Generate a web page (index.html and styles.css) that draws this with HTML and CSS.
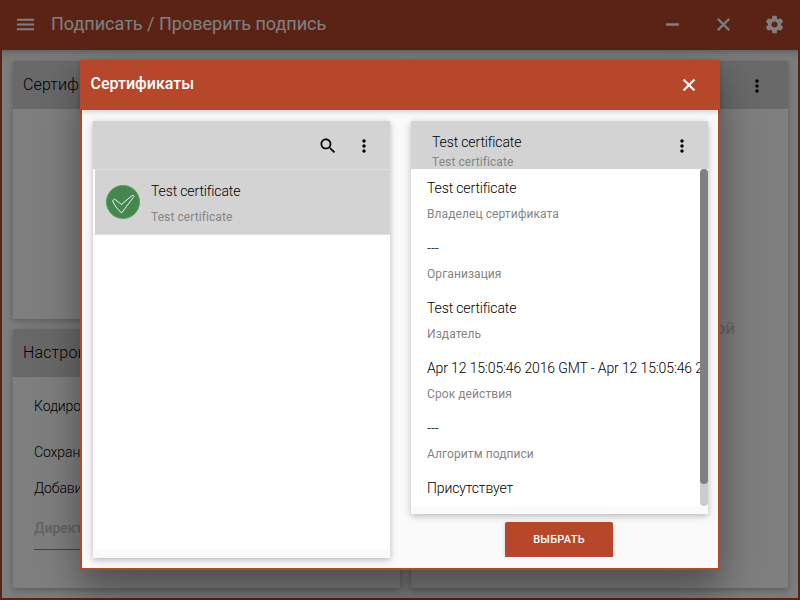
FILE: index.html
```html
<!DOCTYPE html>
<html lang="ru">
<head>
<meta charset="utf-8">
<title>Подписать / Проверить подпись</title>
<link rel="stylesheet" href="styles.css">
</head>
<body>
<div class="app">
  <header class="navbar">
    <svg class="icon menu" viewBox="0 0 24 24"><path d="M3 18h18v-2H3v2zm0-5h18v-2H3v2zm0-7v2h18V6H3z"/></svg>
    <h1 class="title">Подписать / Проверить подпись</h1>
    <div class="window-buttons">
      <svg class="icon bold" viewBox="0 0 24 24"><path d="M19 13H5v-2h14v2z"/></svg>
      <svg class="icon bold" viewBox="0 0 24 24"><path d="M19 6.41L17.59 5 12 10.59 6.41 5 5 6.41 10.59 12 5 17.59 6.41 19 12 13.41 17.59 19 19 17.59 13.41 12z"/></svg>
      <svg class="icon" viewBox="0 0 24 24"><path d="M19.43 12.98c.04-.32.07-.64.07-.98s-.03-.66-.07-.98l2.11-1.65c.19-.15.24-.42.12-.64l-2-3.46c-.12-.22-.39-.3-.61-.22l-2.49 1c-.52-.4-1.08-.73-1.69-.98l-.38-2.65C14.46 2.18 14.25 2 14 2h-4c-.25 0-.46.18-.49.42l-.38 2.65c-.61.25-1.17.59-1.69.98l-2.49-1c-.23-.09-.49 0-.61.22l-2 3.46c-.13.22-.07.49.12.64l2.11 1.65c-.04.32-.07.65-.07.98s.03.66.07.98l-2.11 1.65c-.19.15-.24.42-.12.64l2 3.46c.12.22.39.3.61.22l2.49-1c.52.4 1.08.73 1.69.98l.38 2.65c.03.24.24.42.49.42h4c.25 0 .46-.18.49-.42l.38-2.65c.61-.25 1.17-.59 1.69-.98l2.49 1c.23.09.49 0 .61-.22l2-3.46c.12-.22.07-.49-.12-.64l-2.11-1.65zM12 15.5c-1.93 0-3.5-1.57-3.5-3.5s1.57-3.5 3.5-3.5 3.5 1.57 3.5 3.5-1.57 3.5-3.5 3.5z"/></svg>
    </div>
  </header>
  <main class="workspace">
    <div class="column">
      <section class="card signer">
        <div class="card-head">Сертификаты</div>
      </section>
      <section class="card settings">
        <div class="card-head">Настройки</div>
        <div class="form">
          <div class="option encoding">Кодировка</div>
          <div class="option save">Сохранить</div>
          <div class="option add">Добавить</div>
          <div class="directory">Директория</div>
        </div>
      </section>
    </div>
    <section class="card files">
      <div class="card-head files-head">
        <svg class="icon small" viewBox="0 0 24 24"><path d="M12 8c1.100 0 2-.9 2-2s-.9-2-2-2-2 .9-2 2 .9 2 2 2zm0 2c-1.100 0-2 .9-2 2s.9 2 2 2 2-.9 2-2-.9-2-2-2zm0 6c-1.100 0-2 .9-2 2s.9 2 2 2 2-.9 2-2-.9-2-2-2z"/></svg>
      </div>
      <div class="drop-hint">мышкой</div>
    </section>
  </main>
</div>
<div class="overlay"></div>
<div class="modal">
  <header class="modal-head">
    <h2 class="modal-title">Сертификаты</h2>
    <svg class="icon bold" viewBox="0 0 24 24"><path d="M19 6.41L17.59 5 12 10.59 6.41 5 5 6.41 10.59 12 5 17.59 6.41 19 12 13.41 17.59 19 19 17.59 13.41 12z"/></svg>
  </header>
  <div class="modal-body">
    <section class="card list-card">
      <div class="card-head tools">
        <svg class="icon small" viewBox="0 0 24 24"><path d="M15.5 14h-.79l-.28-.27C15.410 12.590 16 11.110 16 9.500 16 5.910 13.090 3 9.500 3S3 5.910 3 9.500 5.910 16 9.500 16c1.610 0 3.090-.59 4.230-1.570l.27.28v.79l5 4.990L20.490 19l-4.990-5zm-6 0C7.010 14 5 11.990 5 9.500S7.010 5 9.500 5 14 7.010 14 9.500 11.990 14 9.500 14z"/></svg>
        <svg class="icon small" viewBox="0 0 24 24"><path d="M12 8c1.100 0 2-.9 2-2s-.9-2-2-2-2 .9-2 2 .9 2 2 2zm0 2c-1.100 0-2 .9-2 2s.9 2 2 2 2-.9 2-2-.9-2-2-2zm0 6c-1.100 0-2 .9-2 2s.9 2 2 2 2-.9 2-2-.9-2-2-2z"/></svg>
      </div>
      <div class="card-content">
        <div class="cert">
          <svg class="badge" viewBox="0 0 34 34"><circle cx="17" cy="17" r="16.600" fill="#47874f" stroke="#4fa35c" stroke-width=".8"/><path d="M6.500 16L8.500 14L15.500 19.500L26 10.500Q27.500 10 28 11.500L15.500 28Q9 22 6.500 16Z" fill="none" stroke="#fff" stroke-width=".9" stroke-linejoin="round"/></svg>
          <div>
            <div class="name">Test certificate</div>
            <div class="sub">Test certificate</div>
          </div>
        </div>
      </div>
    </section>
    <div class="details">
      <section class="card info-card">
        <div class="card-head info-head">
          <div>
            <div class="name">Test certificate</div>
            <div class="sub">Test certificate</div>
          </div>
          <svg class="icon small" viewBox="0 0 24 24"><path d="M12 8c1.100 0 2-.9 2-2s-.9-2-2-2-2 .9-2 2 .9 2 2 2zm0 2c-1.100 0-2 .9-2 2s.9 2 2 2 2-.9 2-2-.9-2-2-2zm0 6c-1.100 0-2 .9-2 2s.9 2 2 2 2-.9 2-2-.9-2-2-2z"/></svg>
        </div>
        <div class="card-content info">
          <div class="fields">
            <div class="field"><div class="name">Test certificate</div><div class="sub">Владелец сертификата</div></div>
            <div class="field"><div class="name">---</div><div class="sub">Организация</div></div>
            <div class="field"><div class="name">Test certificate</div><div class="sub">Издатель</div></div>
            <div class="field"><div class="name">Apr 12 15:05:46 2016 GMT - Apr 12 15:05:46 2026 GMT</div><div class="sub">Срок действия</div></div>
            <div class="field"><div class="name">---</div><div class="sub">Алгоритм подписи</div></div>
            <div class="field"><div class="name">Присутствует</div></div>
          </div>
          <div class="track"><div class="thumb"></div></div>
        </div>
      </section>
      <button class="select">Выбрать</button>
    </div>
  </div>
</div>
</body>
</html>
```

FILE: styles.css
```css
* { box-sizing: border-box; }
body { margin: 0; width: 800px; height: 600px; overflow: hidden; font-family: Roboto, "Noto Sans", sans-serif; font-size: 14px; color: rgba(0,0,0,.87); }
h1, h2 { margin: 0; }
.icon { display: block; width: 24px; height: 24px; flex: none; fill: #fff; }
.bold { stroke: #fff; stroke-width: .8; }
.small { width: 20px; height: 20px; fill: #000; }
.app { height: 600px; display: flex; flex-direction: column; border: 2px solid #b7472a; border-top: 0; background: #fafafa; }
.navbar { height: 50px; flex: none; margin: 0 -2px; padding: 0 15px 0 14px; display: flex; align-items: center; background: #b7472a; color: #fff; box-shadow: 0 2px 5px rgba(0,0,0,.16), 0 2px 10px rgba(0,0,0,.12); }
.menu { width: 23px; height: 23px; margin-top: -1px; }
.title { margin-left: 14px; font-size: 18px; font-weight: 400; line-height: 48px; padding-bottom: 2px; }
.window-buttons { margin-left: auto; display: flex; gap: 30px; padding-bottom: 1px; }
.window-buttons .icon { width: 21px; height: 21px; }
.workspace { flex: 1; display: flex; gap: 11px; padding: 11px 10px 10px 11px; min-height: 0; }
.column { width: 387px; display: flex; flex-direction: column; gap: 10px; }
.card { background: #fff; box-shadow: 0 2px 5px rgba(0,0,0,.16), 0 2px 10px rgba(0,0,0,.12); }
.card-head { height: 48px; background: #d3d3d3; }
.column .card-head { padding-left: 10px; font-size: 16px; font-weight: 300; letter-spacing: .15px; line-height: 48px; color: #000; }
.signer { height: 258px; }
.settings { flex: 1; }
.form { padding: 18px 20px 0 21px; }
.option { line-height: 22px; font-weight: 300; letter-spacing: -.1px; color: #000; }
.save { margin-top: 24px; }
.add { margin-top: 14px; }
.directory { margin-top: 14px; height: 37px; line-height: 31px; font-weight: 500; color: #c8c8c8; border-bottom: 1px solid #8080a0; }
.files { flex: 1; }
.files-head { display: flex; align-items: center; justify-content: flex-end; padding: 1px 21px 0 0; }
.drop-hint { margin-top: 208px; padding-right: 53px; text-align: right; font-size: 17px; font-weight: 500; line-height: 22px; color: #d0d0d0; }
.overlay { position: absolute; inset: 0; background: rgba(0,0,0,.5); }
.modal { position: absolute; left: 80px; top: 60px; width: 640px; height: 510px; border: 2px solid #b7472a; border-top: 0; border-radius: 2px; background: #fafafa; box-shadow: 0 16px 28px rgba(0,0,0,.22), 0 25px 55px rgba(0,0,0,.21); }
.modal-head { height: 50px; margin: 0 -2px; padding: 0 20.6px 0 10.500px; display: flex; align-items: center; justify-content: space-between; background: #b7472a; color: #fff; border-radius: 2px 2px 0 0; box-shadow: 0 2px 5px rgba(0,0,0,.16); }
.modal-head .icon { width: 20px; height: 20px; }
.modal-title { font-size: 16px; font-weight: 500; line-height: 48px; padding-bottom: 2px; }
.modal-body { display: flex; gap: 21px; padding: 11px 10px 0 11px; }
.list-card { width: 297px; height: 437px; background: #fafafa; }
.tools { display: flex; align-items: center; justify-content: flex-end; gap: 16px; padding: 2px 16px 0 0; }
.list-card .card-content { height: 381px; background: #fff; }
.cert { display: flex; height: 66px; border: 1px solid #e0e0e0; border-left: 2px solid #fff; border-right: 0; background: #d3d3d3; padding: 15px 0 0 11px; }
.badge { width: 34px; height: 34px; margin-right: 11px; }
.name { line-height: 22px; font-weight: 300; letter-spacing: -.13px; color: #000; white-space: nowrap; }
.sub { font-size: 12px; line-height: 16px; letter-spacing: .08px; color: #858585; }
.cert .name { margin-top: -5px; }
.cert .sub { margin-top: 7px; }
.details { width: 297px; display: flex; flex-direction: column; align-items: center; gap: 8px; }
.info-card { width: 297px; height: 393px; background: #fafafa; }
.info-head { display: flex; justify-content: space-between; align-items: flex-start; padding: 10px 16px 0 21px; }
.info-head .small { margin-top: 5px; }
.info-card .info-head .sub { margin-top: 1px; }
.info { height: 337px; display: flex; background: #fff; overflow: hidden; }
.fields { width: 289px; padding-left: 16px; overflow: hidden; }
.field { height: 60px; padding-top: 8px; }
.field .sub { margin-top: 7px; }
.track { width: 8px; border-radius: 4px; background: #ccc; }
.thumb { height: 315px; border-radius: 4px; background: #808080; }
.select { width: 108px; height: 35px; margin-right: 1px; border: 0; border-radius: 2px 2px 0 0; background: #b7472a; color: #fff; font: 500 11px/35px Roboto, "Noto Sans", sans-serif; letter-spacing: .25px; text-transform: uppercase; padding: 0; box-shadow: 0 1px 4px rgba(0,0,0,.16); clip-path: inset(-5px -8px 0); }
```
